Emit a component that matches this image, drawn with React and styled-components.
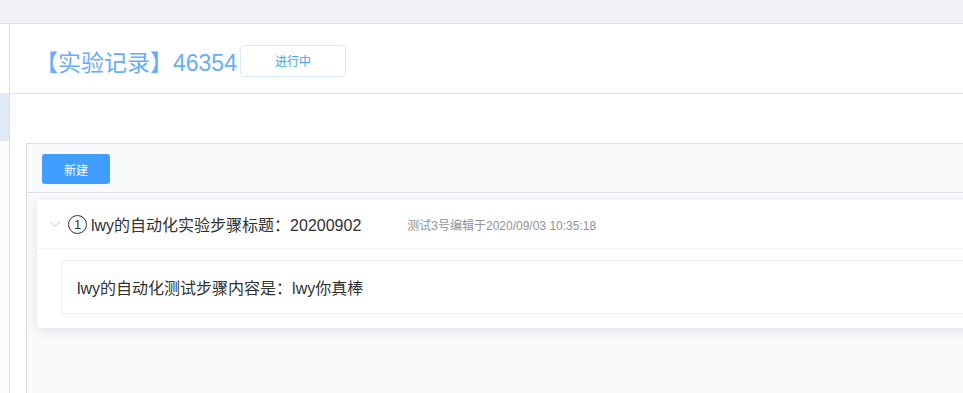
import React from "react";
import styled, { createGlobalStyle } from "styled-components";

const GlobalStyle = createGlobalStyle`
    html, body {
        margin: 0;
        padding: 0;
        width: 963px;
        height: 393px;
        overflow: hidden;
        background: #fff;
    }
    body {
        font-family: "Liberation Sans", "Noto Sans CJK SC", sans-serif;
        color: #303133;
    }
    * { box-sizing: border-box; }
`;

// the panel and the card run off the right edge in the screenshot
const VIEWPORT = styled.div`
    width: 963px;
    height: 393px;
    overflow: hidden;
`;

const PAGE = styled.div`
    width: 1200px;
    height: 393px;
    display: flex;
    flex-direction: column;
`;

const TOPBAR = styled.div`
    height: 24px;
    background-color: #f0f2f5;
    border-bottom: 1px solid #dcdfe6;
    flex-shrink: 0;
`;

const BODY = styled.div`
    flex: 1;
    display: flex;
    flex-direction: row;
    min-height: 0;
`;

const SIDEBAR = styled.div`
    width: 10px;
    flex-shrink: 0;
    border-right: 1px solid #dcdfe6;
    background-color: #fcfcfd;
    display: flex;
    flex-direction: column;
`;

const SIDE_ITEM = styled.div`
    height: ${(p) => p.h}px;
    background-color: ${(p) => (p.active ? "#dfeaf6" : "#fff")};
`;

const MAIN = styled.div`
    flex: 1;
    display: flex;
    flex-direction: column;
`;

const HEADER = styled.div`
    height: 70px;
    border-bottom: 1px solid #dcdfe6;
    display: flex;
    align-items: center;
    padding: 4px 0 0 25px;
`;

const TITLE = styled.h1`
    margin: 0;
    font-size: 23px;
    font-weight: normal;
    color: #66adff;
`;

const TAG = styled.span`
    margin-left: 3px;
    width: 106px;
    height: 32px;
    border: 1px solid #d9ecff;
    border-radius: 4px;
    display: flex;
    align-items: center;
    justify-content: center;
    font-size: 12px;
    color: #409eff;
`;

const CONTENT = styled.div`
    flex: 1;
    padding: 49px 0 0 16px;
    display: flex;
`;

const PANEL = styled.div`
    flex: 1;
    border: 1px solid #dcdfe6;
    border-right: none;
    border-bottom: none;
    background-color: #f9fafc;
    display: flex;
    flex-direction: column;
`;

const TOOLBAR = styled.div`
    height: 49px;
    padding: 10px 15px;
    border-bottom: 1px solid #dcdfe6;
    display: flex;
    align-items: flex-start;
`;

const BUTTON = styled.button`
    width: 68px;
    height: 30px;
    border: none;
    border-radius: 3px;
    background-color: #409eff;
    color: #fff;
    font-family: inherit;
    font-size: 12px;
    cursor: pointer;
`;

const LIST = styled.div`
    padding: 7px 0 0 10px;
`;

const CARD = styled.div`
    background: #fff;
    border-radius: 4px;
    box-shadow: 0 2px 12px rgba(0, 0, 0, 0.1);
`;

const CARD_HEAD = styled.div`
    height: 49px;
    border-bottom: 1px solid #f2f3f5;
    display: flex;
    align-items: center;
    padding-left: 12px;
`;

const NUM = styled.span`
    width: 19px;
    height: 19px;
    border: 1px solid #303133;
    border-radius: 50%;
    display: inline-flex;
    align-items: center;
    justify-content: center;
    font-size: 13px;
    margin: 0 4px 0 7px;
    line-height: 1;
`;

const STEP_TITLE = styled.span`
    font-size: 16px;
    color: #303133;
`;

const META = styled.span`
    margin-left: 46px;
    font-size: 12px;
    color: #909399;
`;

const CARD_BODY = styled.div`
    padding: 11px 0 14px 24px;
`;

const STEP_BOX = styled.div`
    height: 54px;
    border: 1px solid #ebeef5;
    border-right: none;
    border-radius: 4px 0 0 4px;
    display: flex;
    align-items: center;
    padding-left: 15px;
    font-size: 16px;
    color: #303133;
`;

const Chevron = () => (
    <svg width="12" height="12" viewBox="0 0 12 12" fill="none">
        <path d="M1.5 4 L6 8.5 L10.5 4" stroke="#c0c4cc" strokeWidth="1" />
    </svg>
);

const App = () => {
    return (
        <VIEWPORT>
            <GlobalStyle />
            <PAGE>
                <TOPBAR />
                <BODY>
                    <SIDEBAR>
                        <SIDE_ITEM h={69} />
                        <SIDE_ITEM h={48} active />
                    </SIDEBAR>
                    <MAIN>
                        <HEADER>
                            <TITLE>【实验记录】46354</TITLE>
                            <TAG>进行中</TAG>
                        </HEADER>
                        <CONTENT>
                            <PANEL>
                                <TOOLBAR>
                                    <BUTTON>新建</BUTTON>
                                </TOOLBAR>
                                <LIST>
                                    <CARD>
                                        <CARD_HEAD>
                                            <Chevron />
                                            <NUM>1</NUM>
                                            <STEP_TITLE>lwy的自动化实验步骤标题：20200902</STEP_TITLE>
                                            <META>测试3号编辑于2020/09/03 10:35:18</META>
                                        </CARD_HEAD>
                                        <CARD_BODY>
                                            <STEP_BOX>lwy的自动化测试步骤内容是：lwy你真棒</STEP_BOX>
                                        </CARD_BODY>
                                    </CARD>
                                </LIST>
                            </PANEL>
                        </CONTENT>
                    </MAIN>
                </BODY>
            </PAGE>
        </VIEWPORT>
    );
};

export default App;
